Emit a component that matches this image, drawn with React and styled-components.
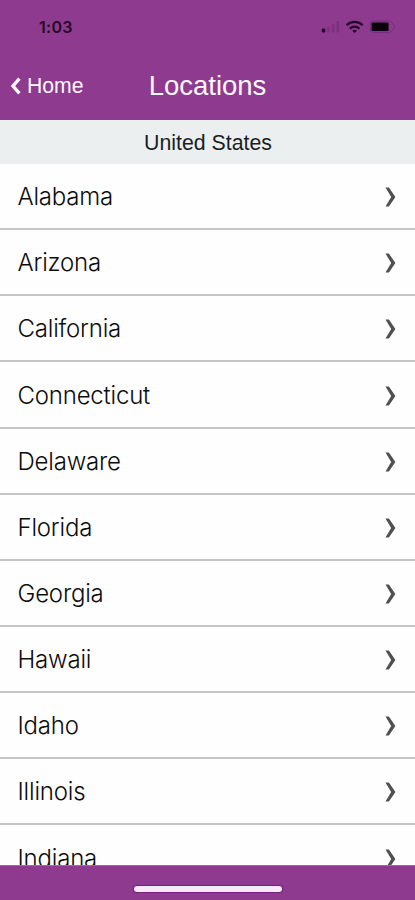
import React, {Component} from 'react';
import styled, {createGlobalStyle} from 'styled-components';

//<<-- styling -->>
const GlobalStyle = createGlobalStyle`
    * {
        box-sizing: border-box;
    }
    body {
        margin: 0;
        overflow: hidden;
    }
`
const Screen = styled.div`
    width: 100%;
    height: 900px;
    display: flex;
    flex-direction: column;
    overflow: hidden;
    background: #fefefe;
    font-family: "Liberation Sans", Arial, sans-serif;
`
const Header = styled.header`
    flex: none;
    height: 120px;
    background: #8e3a8e;
`
const StatusBar = styled.div`
    height: 54px;
    padding: 0 18px 0 39px;
    display: flex;
    align-items: center;
    justify-content: space-between;
`
const Time = styled.span`
    color: #210a24;
    font-family: Inter, sans-serif;
    font-size: 16px;
    font-weight: 600;
    line-height: 20px;
    letter-spacing: 0.3px;
`
const NavBar = styled.div`
    height: 64px;
    padding: 0 10px;
    display: grid;
    grid-template-columns: 1fr auto 1fr;
    align-items: center;
    color: #fff8ff;
`
const BackButton = styled.button`
    display: flex;
    align-items: center;
    gap: 5px;
    padding: 0;
    border: none;
    background: none;
    color: inherit;
    font-family: inherit;
    font-size: 21.2px;
    line-height: 26px;
`
const Title = styled.h1`
    margin: 0;
    font-size: 27.5px;
    font-weight: 400;
    line-height: 32px;
`
const Country = styled.h2`
    flex: none;
    height: 44px;
    margin: 0;
    padding: 1px 0 0 1px;
    background: #ebeff0;
    color: #1c1e1f;
    font-size: 21.3px;
    font-weight: 400;
    line-height: 45px;
    text-align: center;
`
const List = styled.ul`
    flex: 1;
    min-height: 0;
    margin: 0;
    padding: 0;
    overflow: hidden;
    list-style: none;
`
const Row = styled.li`
    height: 66.15px;
    padding: 2.2px 18px 0 17.5px;
    display: flex;
    align-items: center;
    justify-content: space-between;
    border-bottom: 2px solid #c4c5c6;
    color: #0c0c0c;
    font-family: Inter, sans-serif;
    font-size: 24px;
    font-weight: 300;
    line-height: 30px;
    letter-spacing: -0.2px;
`
const Footer = styled.footer`
    flex: none;
    height: 35px;
    display: flex;
    align-items: center;
    justify-content: center;
    padding-top: 12px;
    background: #8e3a8e;
    border-top: 1px solid #a765a8;
`
const HomeIndicator = styled.div`
    width: 148px;
    height: 6px;
    border-radius: 3px;
    background: #f8eaf8;
    box-shadow: 0 0 1px 1px #7d1c80;
`

//<<-- icons -->>
const StatusIcons = () => (
    <svg width="76" height="16" viewBox="0 0 76 16">
        <g transform="translate(0 1)">
            <rect x="0.8" y="8.4" width="3.4" height="4" rx="1.2" fill="#210524"/>
            <rect x="6" y="6.8" width="2.6" height="5.6" rx="0.8" fill="#7b327c"/>
            <rect x="10.8" y="4" width="2.8" height="8.4" rx="0.8" fill="#7b327c"/>
            <rect x="15.4" y="1" width="2.8" height="11.4" rx="0.8" fill="#7b327c"/>
            <g fill="none" stroke="#210524" strokeWidth="2.2">
                <path d="M25.6 5.2a11.3 11.3 0 0 1 16 0"/>
                <path d="M28.8 8.6a6.9 6.9 0 0 1 9.6 0"/>
            </g>
            <path d="M31.3 10.7a3.4 3.4 0 0 1 4.6 0L33.6 13z" fill="#210524"/>
            <path d="M68.4 1H51.6q-2.4 0-2.4 2.6v6.2q0 2.6 2.4 2.6h16.8q1.6 0 2.6-1.6l2.8-4-2.8-4Q70 1 68.4 1z" fill="none" stroke="#73307a"/>
            <rect x="50.6" y="2.5" width="17" height="8.6" rx="1.2" fill="#0b010d"/>
        </g>
    </svg>
)
const BackIcon = () => (
    <svg width="12" height="18" viewBox="0 0 12 18">
        <path d="M9.4 1.6L3 9l6.4 7.4" fill="none" stroke="currentColor" strokeWidth="3.3"/>
    </svg>
)
const RowArrow = () => (
    <svg width="12" height="22" viewBox="0 0 12 22">
        <path d="M0.5 1.6h3.4L10.4 11l-6.5 9.6H0.5L6.2 11z" fill="#505050"/>
    </svg>
)

//<<<--- code --->>>
class App extends Component {
    constructor(){
        super()
        this.state = {
            locations: [
                'Alabama', 'Arizona', 'California', 'Connecticut', 'Delaware', 'Florida',
                'Georgia', 'Hawaii', 'Idaho', 'Illinois', 'Indiana'
            ]
        }
    }

    render(){
        let locationDisplay = this.state.locations.map((el, i) => {
            return (
                <Row key={i}>
                    <span>{el}</span>
                    <RowArrow/>
                </Row>
            )
        })
        return(
            <Screen>
                <GlobalStyle/>
                <Header>
                    <StatusBar>
                        <Time>1:03</Time>
                        <StatusIcons/>
                    </StatusBar>
                    <NavBar>
                        <BackButton><BackIcon/>Home</BackButton>
                        <Title>Locations</Title>
                    </NavBar>
                </Header>
                <Country>United States</Country>
                <List>{locationDisplay}</List>
                <Footer>
                    <HomeIndicator/>
                </Footer>
            </Screen>
        )
    }
}
export default App;
